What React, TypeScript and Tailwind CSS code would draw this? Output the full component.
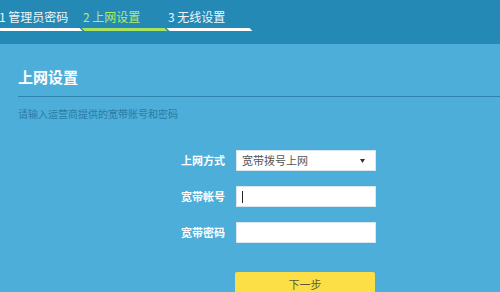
const steps = [
  { label: "1 管理员密码", active: false },
  { label: "2 上网设置", active: true },
  { label: "3 无线设置", active: false },
];

function Field({ label, children }: { label: string; children: React.ReactNode }) {
  return (
    <div className="flex items-center h-[21px]">
      <div className="w-[225px] text-right text-[11px] font-bold text-white">{label}</div>
      <div className="ml-[11px] w-[140px] h-[21px]">{children}</div>
    </div>
  );
}

function App() {
  return (
    <div
      className="w-[500px] h-[292px] overflow-hidden bg-[#4caed9]"
      style={{ fontFamily: '"Noto Sans CJK SC", "Noto Sans", sans-serif' }}
    >
      <header className="h-[44px] bg-[#2589b6] flex gap-[2px] pt-[8px]">
        {steps.map((s, i) => (
          <div key={s.label} className={i === 0 ? "w-[82px] -ml-[1px]" : "w-[83px]"}>
            <div
              className={
                "h-[18px] text-[12px] leading-[18px] whitespace-nowrap " +
                (s.active ? "text-[#b4ea6c]" : "text-[#eef6fa]")
              }
            >
              {s.label}
            </div>
            <div
              className={
                "mt-[2px] h-[3px] skew-x-[45deg] " +
                (s.active ? "bg-[#a8e25e]" : "bg-white")
              }
            />
          </div>
        ))}
      </header>

      <main className="px-[18px]">
        <h1 className="mt-[23px] h-[20px] text-[15px] leading-[20px] font-bold text-white">上网设置</h1>
        <div className="mt-[9px] h-px bg-[#2f84ae] -mr-[18px]" />
        <p className="mt-[10px] text-[10px] leading-[14px] text-[#2b7ba5]">请输入运营商提供的宽带账号和密码</p>
      </main>

      <div className="mt-[29px] flex flex-col gap-[15px]">
        <Field label="上网方式">
          <div className="h-full bg-white border border-[#d8e6ee] flex items-center justify-between pl-[5px] pr-[10px] text-[11px] text-[#555]">
            <span>宽带拨号上网</span>
            <svg width="5" height="4" viewBox="0 0 5 4">
              <path d="M0 0H5L2.5 4Z" fill="#333" />
            </svg>
          </div>
        </Field>
        <Field label="宽带帐号">
          <div className="h-full bg-white border border-[#d8e6ee] flex items-center pl-[5px]">
            <div className="w-px h-[12px] bg-[#222]" />
          </div>
        </Field>
        <Field label="宽带密码">
          <div className="h-full bg-white border border-[#d8e6ee]" />
        </Field>
      </div>

      <div className="mt-[29px] ml-[235px] w-[140px] h-[26px] bg-[#fcdf47] rounded-[2px] flex justify-center pt-[4px] text-[11px] text-[#5a5a3a]">
        下一步
      </div>
    </div>
  );
}

export default App;
